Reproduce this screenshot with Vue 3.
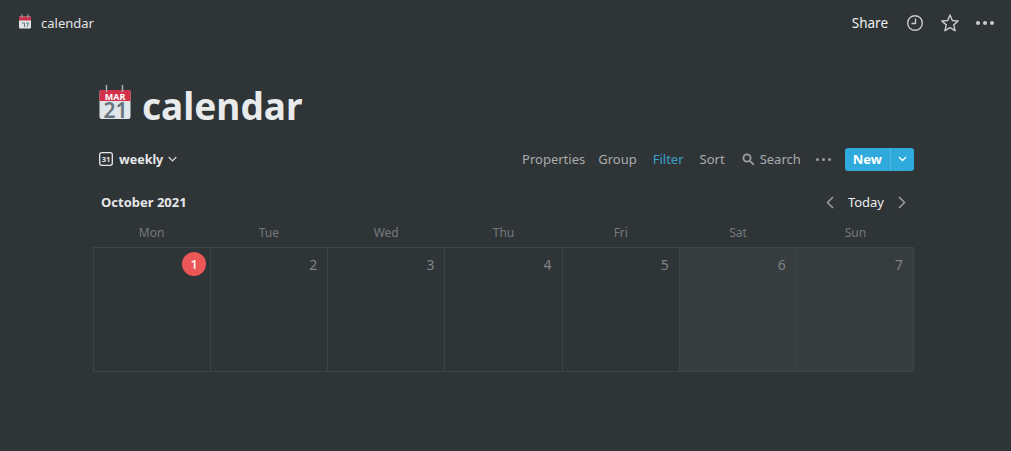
<script setup>
const days = [
  { name: 'Mon', num: 1, today: true },
  { name: 'Tue', num: 2 },
  { name: 'Wed', num: 3 },
  { name: 'Thu', num: 4 },
  { name: 'Fri', num: 5 },
  { name: 'Sat', num: 6, weekend: true },
  { name: 'Sun', num: 7, weekend: true },
]
</script>

<template>
  <div class="page">
    <header class="topbar">
      <div class="crumb">
        <svg class="crumb-icon" width="14" height="15" viewBox="0 0 14 15">
          <rect x="1" y="2.500" width="12" height="12" rx="1" fill="#dfe4e8" />
          <path d="M1 6.500V3.500a1 1 0 0 1 1-1h10a1 1 0 0 1 1 1v3z" fill="#c8324a" />
          <path d="M4 0v4M10 0v4" stroke="#9aa7ad" stroke-width="1" />
          <path d="M4 9h2.500v4M8 9h2.500L9 13" stroke="#68757d" stroke-width="1" fill="none" />
        </svg>
        <span>calendar</span>
      </div>
      <div class="top-actions">
        <span class="share">Share</span>
        <svg width="18" height="18" viewBox="0 0 18 18" fill="none" stroke="#c9cbcc" stroke-width="1.400">
          <circle cx="9" cy="9" r="7.300" />
          <path d="M9.500 4.500V9.500H5.500" />
        </svg>
        <svg width="20" height="20" viewBox="0 0 20 20" fill="none" stroke="#c9cbcc" stroke-width="1.400" stroke-linejoin="round">
          <path d="M10 2l2.300 5.500 5.900.5-4.500 3.900 1.400 5.800L10 14.600l-5.100 3.100 1.400-5.800L1.800 8l5.900-.5z" />
        </svg>
        <svg width="18" height="4" viewBox="0 0 18 4" fill="#c9cbcc">
          <circle cx="2" cy="2" r="2" /><circle cx="9" cy="2" r="2" /><circle cx="16" cy="2" r="2" />
        </svg>
      </div>
    </header>

    <main class="content">
      <div class="title">
        <svg class="title-icon" width="32" height="35" viewBox="0 0 32 35">
          <rect x="0.500" y="5" width="31" height="29" rx="2" fill="#e1e6ea" />
          <path d="M.5 16V7a2 2 0 0 1 2-2h27a2 2 0 0 1 2 2v9z" fill="#d5304a" />
          <path d="M7.500 0v7M23.500 0v7" stroke="#9fb2bb" stroke-width="1.500" />
          <text x="16" y="14.500" class="svg-mar">MAR</text>
          <text x="16.500" y="33" class="svg-day">21</text>
        </svg>
        <h1>calendar</h1>
      </div>

      <div class="toolbar">
        <div class="view">
          <svg width="14" height="14" viewBox="0 0 14 14">
            <rect x=".7" y=".7" width="12.600" height="12.600" rx="2" fill="none" stroke="#e6e7e8" stroke-width="1.300" />
            <text x="7" y="10.200" class="svg-31">31</text>
          </svg>
          <span>weekly</span>
          <svg width="9" height="6" viewBox="0 0 9 6" fill="none" stroke="#d8d9da" stroke-width="1.200"><path d="M.7 1l3.800 3.800L8.300 1" /></svg>
        </div>
        <div class="tools">
          <span class="tool">Properties</span>
          <span class="tool">Group</span>
          <span class="tool active">Filter</span>
          <span class="tool">Sort</span>
          <span class="tool search">
            <svg width="13" height="13" viewBox="0 0 13 13" fill="none" stroke="#9b9ea0" stroke-width="1.800">
              <circle cx="5" cy="5" r="3.600" /><path d="M7.800 7.800l4 4" />
            </svg>
            Search
          </span>
          <svg class="more" width="15" height="3" viewBox="0 0 15 3" fill="#9b9ea0">
            <circle cx="1.500" cy="1.500" r="1.500" /><circle cx="7.500" cy="1.500" r="1.500" /><circle cx="13.500" cy="1.500" r="1.500" />
          </svg>
          <div class="new">
            <span class="new-label">New</span>
            <span class="new-arrow">
              <svg width="9" height="6" viewBox="0 0 9 6" fill="none" stroke="#fff" stroke-width="1.300"><path d="M1 1l3.500 3.500L8 1" /></svg>
            </span>
          </div>
        </div>
      </div>

      <div class="month-bar">
        <span class="month">October 2021</span>
        <div class="nav">
          <svg width="8" height="13" viewBox="0 0 8 13" fill="none" stroke="#9b9ea0" stroke-width="1.500"><path d="M7 1L1.500 6.500 7 12" /></svg>
          <span class="today-btn">Today</span>
          <svg width="8" height="13" viewBox="0 0 8 13" fill="none" stroke="#9b9ea0" stroke-width="1.500"><path d="M1 1l5.500 5.500L1 12" /></svg>
        </div>
      </div>

      <div class="weekdays">
        <div v-for="d in days" :key="d.name" class="weekday">{{ d.name }}</div>
      </div>

      <div class="week">
        <div v-for="d in days" :key="d.num" class="cell" :class="{ weekend: d.weekend }">
          <span class="num" :class="{ today: d.today }">{{ d.num }}</span>
        </div>
      </div>
    </main>
  </div>
</template>

<style>
html, body { margin: 0; background: #2f3437; }
</style>

<style scoped>
.page {
  width: 1011px;
  height: 451px;
  overflow: hidden;
  background: #2f3437;
  font-family: "Noto Sans", "Open Sans", sans-serif;
  color: #e6e7e8;
}
.topbar {
  height: 45px;
  display: flex;
  align-items: center;
  justify-content: space-between;
  padding: 0 17px 0 18px;
}
.crumb {
  display: flex;
  align-items: center;
  gap: 9px;
  font-size: 13px;
  color: #e3e4e5;
}
.crumb-icon { margin-top: -3px; }
.top-actions {
  display: flex;
  align-items: center;
  gap: 16px;
}
.share { font-size: 13.500px; color: #f0f0f0; margin-right: 2px; }
.content { padding: 0 97px 0 93px; }
.title {
  padding-top: 37px;
  height: 47px;
  display: flex;
  align-items: center;
  gap: 11px;
  padding-left: 6px;
}
.title-icon { margin-top: -7px; overflow: visible; }
h1 {
  margin: 0;
  font-size: 37px;
  line-height: 47px;
  font-weight: 700;
  color: #e9eaeb;
}
.svg-mar { font: 700 9px "Noto Sans", sans-serif; fill: #fff; text-anchor: middle; }
.svg-day { font: 600 21px "Noto Sans", sans-serif; fill: #67747c; text-anchor: middle; }
.svg-31 { font: 700 7.500px "Noto Sans", sans-serif; fill: #e6e7e8; text-anchor: middle; }
.toolbar {
  margin-top: 16px;
  height: 28px;
  display: flex;
  align-items: center;
  justify-content: space-between;
  padding-left: 6px;
}
.view {
  display: flex;
  align-items: center;
  gap: 5px;
  font-size: 12.500px;
  font-weight: 700;
  color: #e6e7e8;
}
.view span { margin-left: 1px; }
.tools {
  display: flex;
  align-items: center;
  font-size: 13px;
  color: #a9abad;
}
.tool { margin-right: 13px; }
.tool.active { color: #3aa0cb; margin-left: 3px; margin-right: 16px; }
.search { display: flex; align-items: center; gap: 5px; margin-left: 4px; margin-right: 15px; }
.more { margin-right: 14px; }
.new {
  display: flex;
  height: 23px;
  border-radius: 3px;
  overflow: hidden;
  background: #2eaadc;
  color: #fff;
  font-weight: 700;
  font-size: 13px;
}
.new-label { display: flex; align-items: center; padding: 0 8px; border-right: 1px solid #4fb6de; }
.new-arrow { width: 23px; display: flex; align-items: center; justify-content: center; }
.month-bar {
  margin-top: 17px;
  height: 24px;
  display: flex;
  align-items: center;
  justify-content: space-between;
  padding: 0 8px;
}
.month { font-size: 13px; font-weight: 700; color: #e6e7e8; }
.nav { display: flex; align-items: center; gap: 14px; }
.today-btn { font-size: 13px; color: #eceded; }
.weekdays {
  display: grid;
  grid-template-columns: repeat(7, 1fr);
  height: 31px;
  align-items: center;
  margin-top: 2px;
  padding-top: 1px;
  box-sizing: border-box;
}
.weekday { text-align: center; font-size: 12px; color: #75797c; }
.week {
  display: grid;
  grid-template-columns: repeat(7, 1fr);
  height: 123px;
  border-top: 1px solid #3f4447;
  border-bottom: 1px solid #3f4447;
  border-left: 1px solid #3f4447;
}
.cell {
  border-right: 1px solid #3f4447;
  display: flex;
  justify-content: flex-end;
  align-items: flex-start;
  padding: 4px 4px 0 0;
  min-width: 0;
}
.cell.weekend { background: #373c3f; }
.num {
  width: 24px;
  height: 24px;
  margin-right: -2px;
  display: flex;
  align-items: center;
  justify-content: center;
  font-size: 14px;
  color: #7f8386;
}
.num.today {
  margin-right: 0;
  border-radius: 50%;
  background: #eb5757;
  color: #fff;
  font-size: 13px;
  font-weight: 500;
}
</style>
